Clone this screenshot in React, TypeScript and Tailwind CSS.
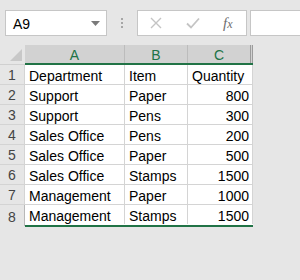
const rows = [
  ['Department', 'Item', 'Quantity'],
  ['Support', 'Paper', '800'],
  ['Support', 'Pens', '300'],
  ['Sales Office', 'Pens', '200'],
  ['Sales Office', 'Paper', '500'],
  ['Sales Office', 'Stamps', '1500'],
  ['Management', 'Paper', '1000'],
  ['Management', 'Stamps', '1500'],
];

export default function App() {
  return (
    <div className="w-[300px] h-[280px] bg-[#e6e6e6] overflow-hidden text-[14px] text-black font-['Liberation_Sans',Arial,sans-serif]">
      {/* name box + formula bar */}
      <div className="flex h-[45px] pt-[10px] pl-[5px]">
        <div className="w-[102px] h-[26px] bg-white border border-[#c6c6c6] flex items-center justify-between pl-[7px] pr-[6px]">
          <span className="leading-none pt-[1px]">A9</span>
          <svg width="9" height="5" viewBox="0 0 9 5">
            <path d="M0 0H9L4.5 5Z" fill="#7a7a7a" />
          </svg>
        </div>
        <div className="w-[30px] h-[26px] flex flex-col items-center justify-center gap-[2px]">
          <span className="w-[2px] h-[2px] bg-[#a6a6a6]" />
          <span className="w-[2px] h-[2px] bg-[#a6a6a6]" />
          <span className="w-[2px] h-[2px] bg-[#a6a6a6]" />
        </div>
        <div className="w-[110px] h-[26px] bg-white border border-[#c6c6c6] flex items-center">
          <svg className="ml-[12px]" width="12" height="12" viewBox="0 0 12 12">
            <path d="M1 1L11 11M11 1L1 11" stroke="#c4c4c4" strokeWidth="1.4" />
          </svg>
          <svg className="ml-[24px]" width="14" height="12" viewBox="0 0 14 12">
            <path d="M1 6.5L5 10.5L13 1.5" stroke="#c4c4c4" strokeWidth="1.8" fill="none" />
          </svg>
          <span className="ml-[23px] italic text-[15px] leading-none text-[#6e6e6e] font-['Liberation_Serif',serif]">
            f<span className="text-[12px]">x</span>
          </span>
        </div>
        <div className="ml-[3px] flex-1 h-[26px] bg-white border border-r-0 border-[#c6c6c6]" />
      </div>

      {/* column headers */}
      <div className="flex h-[20px]">
        <div className="w-[25px] h-[20px] border-b border-[#d0d0d0] flex items-end justify-end pr-[3px] pb-[3px]">
          <svg width="12" height="12" viewBox="0 0 12 12">
            <path d="M12 0V12H0Z" fill="#c8c8c8" />
          </svg>
        </div>
        <div className="flex border-b-2 border-[#217346]">
          {['A', 'B', 'C'].map((c, i) => (
            <div
              key={c}
              className={
                i === 0
                  ? 'w-[100px] h-[18px] bg-[#d2d2d2] border-r border-[#bcbcbc] flex items-center justify-center pt-[2px] text-[#217346] leading-none'
                  : i === 1
                  ? 'w-[63px] h-[18px] bg-[#d2d2d2] border-r border-[#bcbcbc] flex items-center justify-center pt-[2px] text-[#217346] leading-none'
                  : 'w-[65px] h-[18px] bg-[#d2d2d2] border-r-[3px] border-double border-[#9c9c9c] flex items-center justify-center pt-[2px] text-[#217346] leading-none'
              }
            >
              {c}
            </div>
          ))}
        </div>
      </div>

      {/* data rows */}
      <div className="flex">
        <div className="w-[25px] flex flex-col">
          {rows.map((_, i) => (
            <div
              key={i}
              className={`w-[25px] ${i === 7 ? 'h-[21px]' : 'h-[20px] border-b border-[#d4d4d4]'} border-r border-[#b8b8b8] flex items-end justify-center text-[#444444] leading-[16px] pb-[1px]`}
            >
              {i + 1}
            </div>
          ))}
        </div>
        <div className="flex flex-col bg-white border-b-2 border-[#217346] h-[162px]">
          {rows.map((r, i) => (
            <div key={i} className={`flex ${i === 7 ? 'h-[19px]' : 'h-[20px] border-b border-[#d4d4d4]'}`}>
              <div className="w-[100px] border-r border-[#d4d4d4] pl-[4px] leading-[16px] flex items-end whitespace-nowrap">{r[0]}</div>
              <div className="w-[63px] border-r border-[#d4d4d4] pl-[4px] leading-[16px] flex items-end whitespace-nowrap">{r[1]}</div>
              <div className={`w-[65px] border-r border-[#d4d4d4] pl-[4px] pr-[3px] leading-[16px] flex items-end whitespace-nowrap ${i === 0 ? 'justify-start' : 'justify-end'}`}>{r[2]}</div>
            </div>
          ))}
        </div>
      </div>
    </div>
  );
}
